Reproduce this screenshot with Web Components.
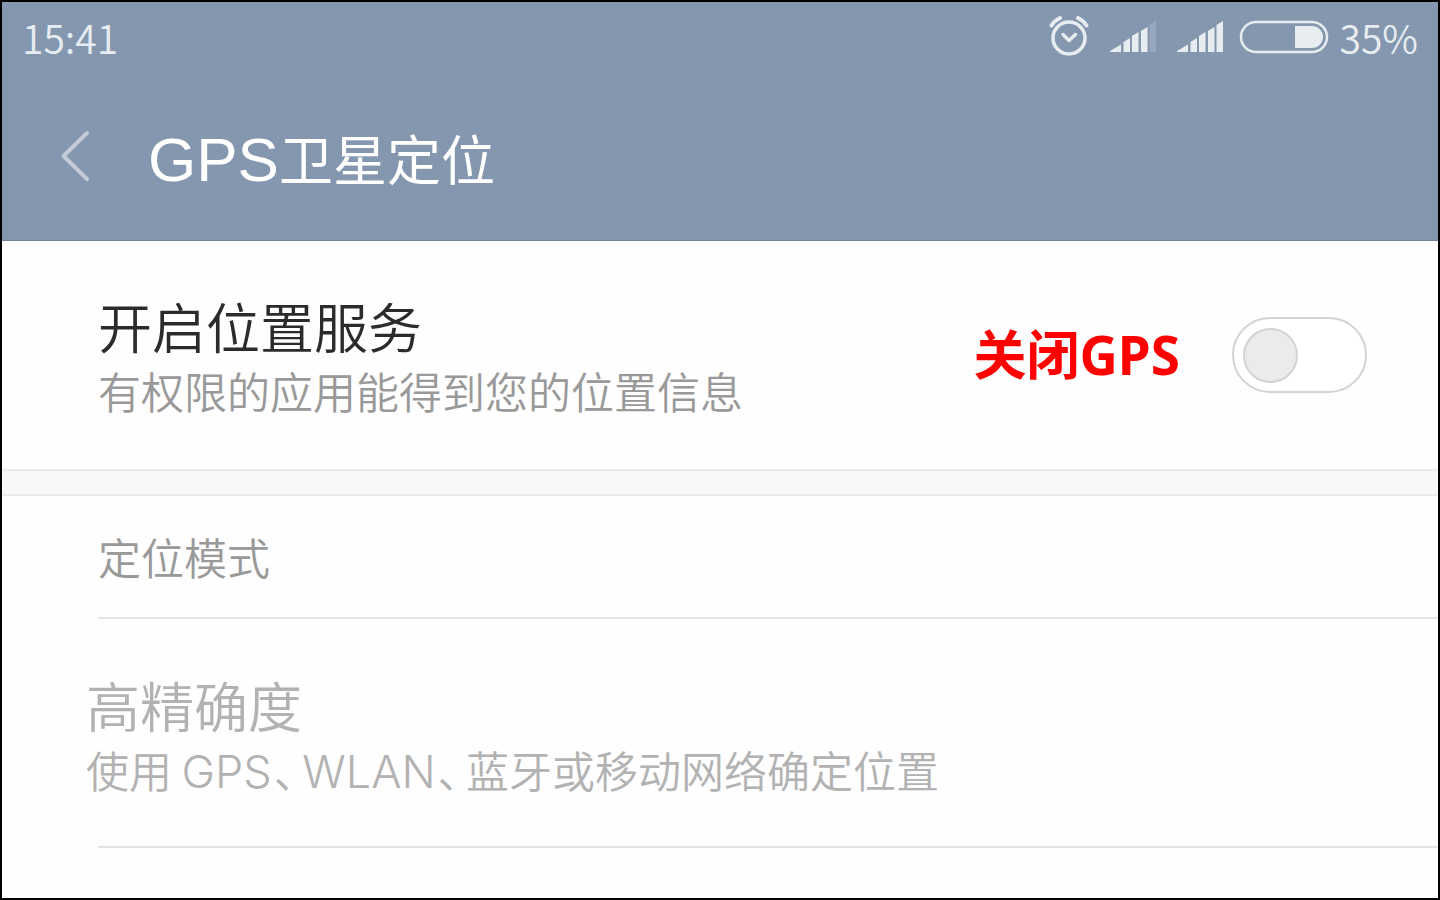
<!DOCTYPE html>
<html lang="zh-CN">
<head>
<meta charset="utf-8">
<meta name="viewport" content="width=device-width, initial-scale=1">
<title>GPS卫星定位</title>
<style>
  body {
    margin: 0;
    font-family: "Noto Sans CJK SC", sans-serif;
    font-weight: 350;
    background: #fefefe;
  }
</style>
</head>
<body>

<phone-screen>
  <status-bar slot="header" time="15:41" battery="35"></status-bar>
  <title-bar slot="header"><latin-text>GPS</latin-text>卫星定位</title-bar>

  <setting-row>
    <span slot="title">开启位置服务</span>
    <span slot="summary">有权限的应用能得到您的位置信息</span>
    <side-note slot="control">关闭GPS</side-note>
    <toggle-switch slot="control" label="开启位置服务"></toggle-switch>
  </setting-row>
  <section-gap></section-gap>
  <section-label>定位模式</section-label>
  <setting-row disabled>
    <span slot="title">高精确度</span>
    <span slot="summary">使用 <latin-text>GPS</latin-text><narrow-mark>、</narrow-mark><latin-text>WLAN</latin-text><narrow-mark>、</narrow-mark>蓝牙或移动网络确定位置</span>
  </setting-row>
</phone-screen>

<!-- Framed screen with a coloured header -->
<template id="phone-screen">
  <style>
    :host {
      display: block;
      box-sizing: border-box;
      min-height: 100vh;
      border: 2px solid #000;
    }
    header {
      background: #8497af;
      border-bottom: 1px solid #71839d;
    }
  </style>
  <header><slot name="header"></slot></header>
  <main><slot></slot></main>
</template>

<!-- Clock, alarm, signal and battery -->
<template id="status-bar">
  <style>
    :host {
      display: flex;
      justify-content: space-between;
      align-items: center;
      height: 70px;
      padding: 0 20px;
      font-size: 39px;
      line-height: 68px;
      color: #e7ecf1;
    }
    .icons, .power { display: flex; align-items: center; }
    .icons { gap: 21px; }
    .power { gap: 11px; margin-left: -5px; }
    svg { display: block; flex: none; }
  </style>
  <time></time>
  <div class="icons">
    <svg width="40" height="44" viewBox="0 0 40 44" fill="none" stroke="currentColor" stroke-linecap="round" stroke-linejoin="round">
      <circle cx="20" cy="23" r="16" stroke-width="3.500"/>
      <path d="M14 19.500l6 6L26.500 19.500" stroke-width="3.500"/>
      <path d="M2.500 10.500Q5.500 5.500 11 3M37.500 10.500Q34.500 5.500 29 3" stroke-width="4"/>
    </svg>
    <svg width="46" height="32" viewBox="0 0 46 32" fill="currentColor">
      <path d="M0 31V30L11 23.500V31ZM13.500 21L20 17V31H13.500ZM22 15L28.500 11V31H22ZM31 10L37.500 6V31H31Z"/>
      <path d="M39.500 4L46 0V31H39.500Z" opacity=".2"/>
    </svg>
    <svg width="46" height="32" viewBox="0 0 46 32" fill="currentColor">
      <path d="M0 31V30L11 23.500V31ZM13.500 21L20 17V31H13.500ZM22 15L28.500 11V31H22ZM31 10L37.500 6V31H31ZM39.500 4L46 0V31H39.500Z"/>
    </svg>
    <div class="power">
      <svg width="90" height="34" viewBox="0 0 90 34">
        <rect x="2" y="2" width="86" height="30" rx="15" fill="none" stroke="currentColor" stroke-width="2.500"/>
        <path d="M56 6H73A11 11 0 0 1 73 28H56Z" fill="currentColor"/>
      </svg>
      <span class="level"></span>
    </div>
  </div>
</template>

<!-- Back button and page title -->
<template id="title-bar">
  <style>
    :host {
      --latin-font: "Liberation Sans";
      --latin-size: 62px;
      display: flex;
      align-items: center;
      height: 168px;
      box-sizing: border-box;
      padding: 0 54px;
      gap: 56px;
      color: #fff;
    }
    button {
      border: 0;
      padding: 0;
      background: none;
      color: #c2ccd8;
    }
    svg { display: block; }
    h1 {
      margin: 0;
      padding-top: 4px;
      font-size: 54px;
      font-weight: 400;
      line-height: 80px;
    }
  </style>
  <button type="button" aria-label="返回">
    <svg width="36" height="56" viewBox="0 0 36 56" fill="none" stroke="currentColor" stroke-width="4" stroke-linecap="round" stroke-linejoin="round">
      <path d="M31 5L7.500 28L31 51"/>
    </svg>
  </button>
  <h1><slot></slot></h1>
</template>

<!-- Title, summary and an optional control on the right -->
<template id="setting-row">
  <style>
    :host {
      display: flex;
      justify-content: space-between;
      align-items: center;
      box-sizing: border-box;
      height: 228px;
      padding: 0 71px 0 96px;
    }
    :host([disabled]) {
      position: relative;
      height: 229px;
      padding-left: 84px;
    }
    :host([disabled])::after {
      content: "";
      position: absolute;
      left: 96px;
      right: 0;
      bottom: 0;
      height: 2px;
      background: #e3e3e3;
    }
    .title { font-size: 54px; line-height: 70px; color: #2b2b2b; }
    .summary { font-size: 43px; line-height: 58px; color: #999; }
    :host([disabled]) .title, :host([disabled]) .summary { color: #b2b2b2; }
    .control { display: flex; align-items: center; gap: 52px; }
  </style>
  <div class="text">
    <div class="title"><slot name="title"></slot></div>
    <div class="summary"><slot name="summary"></slot></div>
  </div>
  <div class="control"><slot name="control"></slot></div>
</template>

<template id="toggle-switch">
  <style>
    :host { display: block; }
    input {
      display: flex;
      align-items: center;
      appearance: none;
      box-sizing: border-box;
      width: 135px;
      height: 76px;
      margin: 0;
      padding: 0 9px;
      border: 2px solid #d3d3d3;
      border-radius: 38px;
      background: #fff;
    }
    input::before {
      content: "";
      box-sizing: border-box;
      width: 55px;
      height: 55px;
      border: 2px solid #d3d3d3;
      border-radius: 50%;
      background: #ebebeb;
    }
    input:checked { justify-content: flex-end; background: #8497af; }
  </style>
  <input type="checkbox" role="switch">
</template>

<template id="side-note">
  <style>
    :host {
      display: block;
      font: 700 53px/76px "Noto Sans", "Noto Sans CJK SC", sans-serif;
      color: #f00;
    }
  </style>
  <slot></slot>
</template>

<template id="section-gap">
  <style>
    :host {
      display: block;
      height: 23px;
      border: solid #ebebeb;
      border-width: 2px 0;
      background: #f7f7f7;
    }
  </style>
</template>

<template id="section-label">
  <style>
    :host {
      display: block;
      margin-left: 96px;
      border-bottom: 2px solid #e3e3e3;
      font-size: 43px;
      line-height: 121px;
      color: #999;
    }
  </style>
  <slot></slot>
</template>

<template id="latin-text"><style>:host { font-family: var(--latin-font, Inter), sans-serif; font-size: var(--latin-size, 45px); line-height: 1; }</style><slot></slot></template>

<!-- Enumeration comma in its half-width form -->
<template id="narrow-mark"><style>:host { font-feature-settings: "halt"; padding: 0 7px 0 2px; }</style><slot></slot></template>

<script>
/**
 * Base class: clones the template that has the tag's name.
 */
class TemplateElement extends HTMLElement {
  constructor() {
    super()
    this.root = this.attachShadow({ mode: 'open' })
    const template = document.getElementById(this.localName)
    this.root.appendChild(template.content.cloneNode(true))
  }
}

/**
 * Status bar, filled from its time and battery attributes.
 */
class StatusBar extends TemplateElement {
  connectedCallback() {
    this.root.querySelector('time').textContent = this.getAttribute('time')
    this.root.querySelector('.level').textContent = this.getAttribute('battery') + '%'
  }
}

/**
 * On/off switch.
 */
class ToggleSwitch extends TemplateElement {
  connectedCallback() {
    this.input = this.root.querySelector('input')
    this.input.setAttribute('aria-label', this.getAttribute('label'))
  }

  toggle() {
    this.input.click()
  }
}

/**
 * Row of settings. A click on its title flips its switch.
 */
class SettingRow extends TemplateElement {
  connectedCallback() {
    this.root.querySelector('.title').addEventListener('click', () => {
      const control = this.querySelector('toggle-switch')
      if(control) {
        control.toggle()
      }
    })
  }
}

customElements.define('phone-screen', class extends TemplateElement {})
customElements.define('status-bar', StatusBar)
customElements.define('title-bar', class extends TemplateElement {})
customElements.define('toggle-switch', ToggleSwitch)
customElements.define('setting-row', SettingRow)
customElements.define('side-note', class extends TemplateElement {})
customElements.define('section-gap', class extends TemplateElement {})
customElements.define('section-label', class extends TemplateElement {})
customElements.define('latin-text', class extends TemplateElement {})
customElements.define('narrow-mark', class extends TemplateElement {})
</script>
</body>
</html>
